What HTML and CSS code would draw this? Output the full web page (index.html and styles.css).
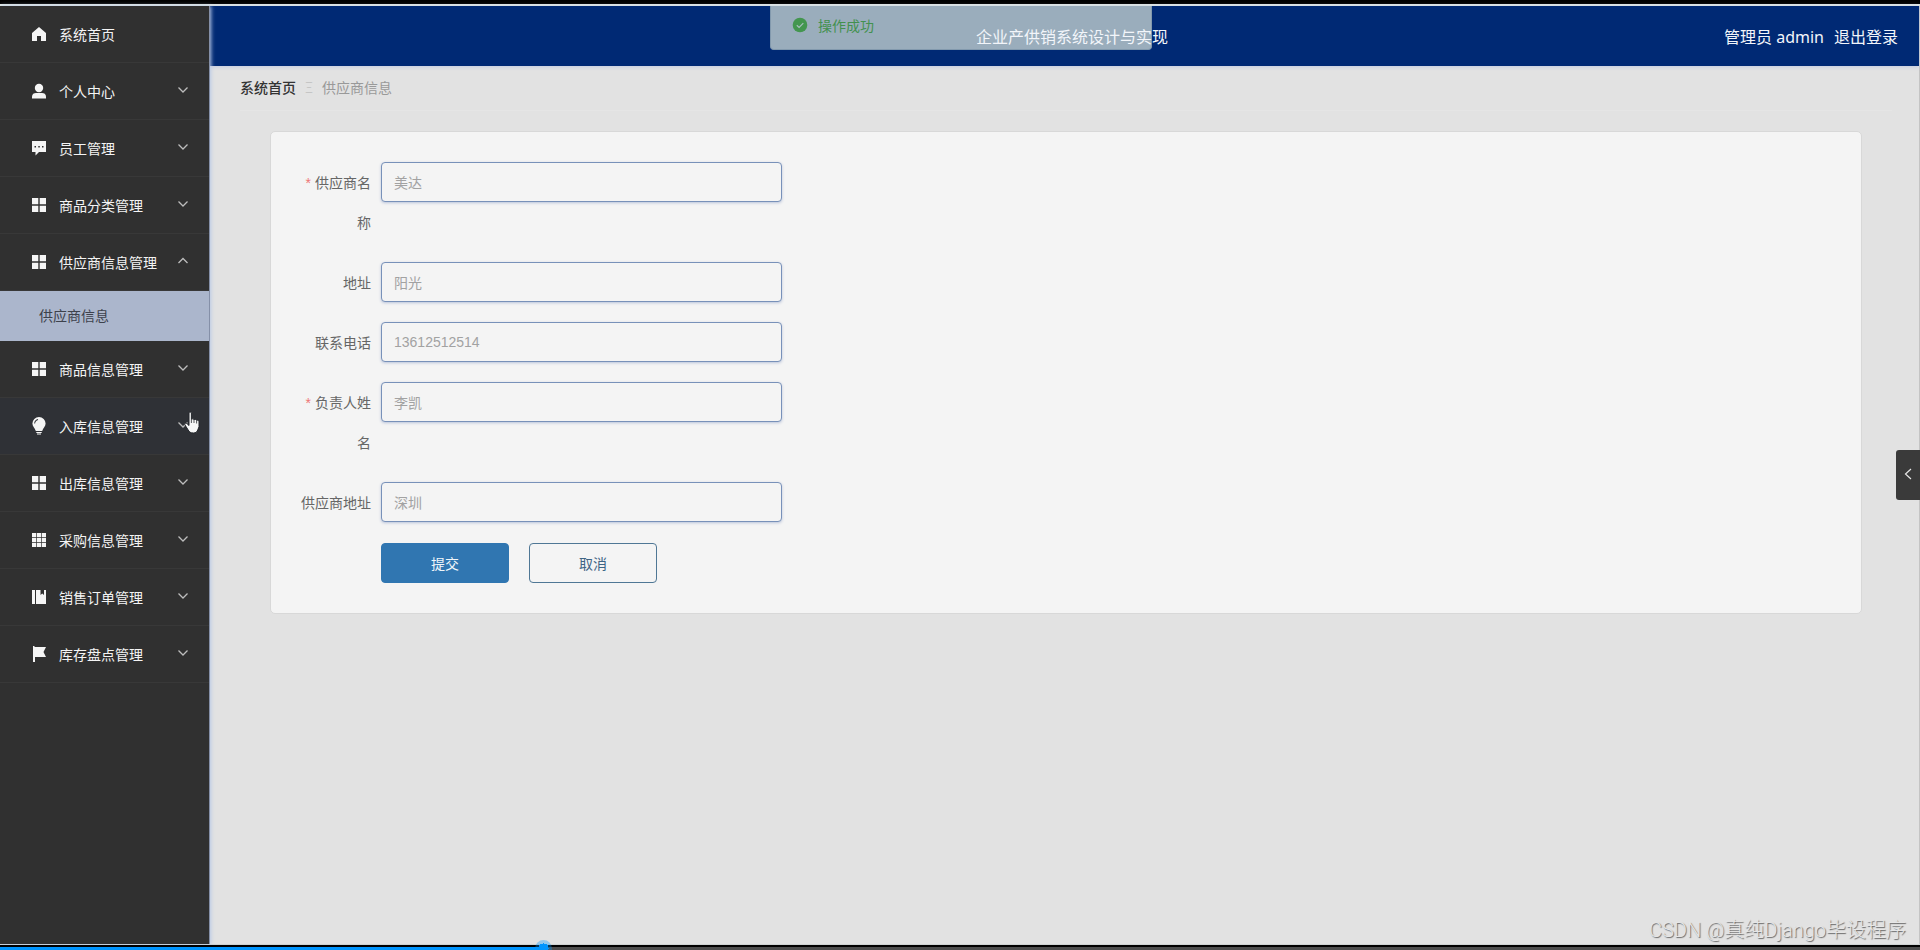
FILE: index.html
```html
<!DOCTYPE html>
<html lang="zh-CN">
<head>
<meta charset="utf-8">
<title>企业产供销系统设计与实现</title>
<link rel="stylesheet" href="styles.css">
</head>
<body>
<svg class="sprite" aria-hidden="true">
  <symbol id="home" viewBox="0 0 16 16"><path d="M8 1 1 7v8h5v-5h4v5h5V7z"/></symbol>
  <symbol id="user" viewBox="0 0 16 16"><circle cx="8" cy="5" r="4.2"/><path d="M1 15.500v-2C1 11 3 10 5 10h6c2 0 4 1 4 3.500v2z"/></symbol>
  <symbol id="chat" viewBox="0 0 16 16"><path fill-rule="evenodd" d="M1 1h14v11H8l-3.500 3.500V12H1zM3.500 6v1.500H5V6zM7.300 6v1.500h1.500V6zM11 6v1.500h1.500V6z"/></symbol>
  <symbol id="menu" viewBox="0 0 16 16"><path d="M1 1h6.300v6.300H1zM8.700 1H15v6.300H8.700zM1 8.700h6.300V15H1zM8.700 8.700H15V15H8.700z"/></symbol>
  <symbol id="bulb" viewBox="0 0 16 18"><path fill-rule="evenodd" d="M8 0a6.600 6.600 0 0 0-6.600 6.600C1.400 9.500 4 11.500 4.800 14h6.400c.8-2.500 3.400-4.500 3.400-7.400A6.600 6.600 0 0 0 8 0zM3.200 6.500C3.200 4 5 2.200 7 2l.1.900C5.500 3.200 4.200 4.600 4.100 6.500z"/><path d="M5.300 15h5.400v1H5.300zM6 16.500h4v1H6z"/></symbol>
  <symbol id="grid" viewBox="0 0 16 16"><path d="M1 1h4.300v4.300H1zM6 1h4v4.300H6zM10.700 1H15v4.300h-4.300zM1 6h4.300v4H1zM6 6h4v4H6zM10.700 6H15v4h-4.300zM1 10.700h4.300V15H1zM6 10.700h4V15H6zM10.700 10.700H15V15h-4.300z"/></symbol>
  <symbol id="book" viewBox="0 0 16 16"><path d="M1 1h3v14H1zM5 1h4.500v5l1.700-1.500L13 6V1h2v14H5z"/></symbol>
  <symbol id="flag" viewBox="0 0 16 18"><path d="M2 1h1.500v1H15l-2.500 5 2.500 5H4v5H2z"/></symbol>
  <symbol id="down" viewBox="0 0 12 12"><path d="m1.500 3.500 4.500 4.500 4.500-4.500" fill="none" stroke="currentColor" stroke-width="1.300"/></symbol>
  <symbol id="up" viewBox="0 0 12 12"><path d="M1.500 8 6 3.500 10.500 8" fill="none" stroke="currentColor" stroke-width="1.300"/></symbol>
</svg>

<div class="frame">
  <div class="frame-top"></div>
  <div class="app">
    <nav class="sidebar" aria-label="主菜单">
      <a class="item" href="#"><svg class="icon"><use href="#home"/></svg><span class="item-text">系统首页</span></a>
      <a class="item" href="#"><svg class="icon"><use href="#user"/></svg><span class="item-text">个人中心</span><svg class="arrow"><use href="#down"/></svg></a>
      <a class="item" href="#"><svg class="icon"><use href="#chat"/></svg><span class="item-text">员工管理</span><svg class="arrow"><use href="#down"/></svg></a>
      <a class="item" href="#"><svg class="icon"><use href="#menu"/></svg><span class="item-text">商品分类管理</span><svg class="arrow"><use href="#down"/></svg></a>
      <a class="item" href="#"><svg class="icon"><use href="#menu"/></svg><span class="item-text">供应商信息管理</span><svg class="arrow"><use href="#up"/></svg></a>
      <a class="subitem" href="#">供应商信息</a>
      <a class="item" href="#"><svg class="icon"><use href="#menu"/></svg><span class="item-text">商品信息管理</span><svg class="arrow"><use href="#down"/></svg></a>
      <a class="item item-hover" href="#"><svg class="icon"><use href="#bulb"/></svg><span class="item-text">入库信息管理</span><svg class="arrow"><use href="#down"/></svg>
        <svg class="pointer" viewBox="0 0 18 24"><path d="M5 2c0-1.300 2.400-1.300 2.400 0v6.500c.4-1 2.500-.8 2.600.4.500-.9 2.400-.6 2.600.6.700-.7 2.400-.3 2.400 1.200v4.800c0 1-.8 2-1.200 3.200-.5 2-2 3.300-4.300 3.300-3 0-4.300-1-5.300-3L.9 13.800c-.8-1.300.8-2.300 2-1.300L5 14.500z" fill="#f7f7f7" stroke="#24272c" stroke-width="1"/><path d="M7.400 8.500V12M10 9v3M12.600 10v2.500" stroke="#44464a" stroke-width="0.900"/></svg></a>
      <a class="item" href="#"><svg class="icon"><use href="#menu"/></svg><span class="item-text">出库信息管理</span><svg class="arrow"><use href="#down"/></svg></a>
      <a class="item" href="#"><svg class="icon"><use href="#grid"/></svg><span class="item-text">采购信息管理</span><svg class="arrow"><use href="#down"/></svg></a>
      <a class="item" href="#"><svg class="icon"><use href="#book"/></svg><span class="item-text">销售订单管理</span><svg class="arrow"><use href="#down"/></svg></a>
      <a class="item" href="#"><svg class="icon"><use href="#flag"/></svg><span class="item-text">库存盘点管理</span><svg class="arrow"><use href="#down"/></svg></a>
    </nav>

    <div class="content">
      <header class="header">
        <h1 class="title">企业产供销系统设计与实现</h1>
        <div class="account"><span>管理员 admin</span><a class="logout" href="#">退出登录</a></div>
      </header>
      <main class="main">
        <nav class="crumbs" aria-label="面包屑"><a class="crumb-home" href="#">系统首页</a><span class="crumb-sep">Ξ</span><span>供应商信息</span></nav>
        <form class="card">
          <div class="row">
            <label class="label required" for="name">供应商名称</label>
            <input class="input" id="name" type="text" value="美达" readonly>
          </div>
          <div class="row">
            <label class="label" for="addr">地址</label>
            <input class="input" id="addr" type="text" value="阳光" readonly>
          </div>
          <div class="row">
            <label class="label" for="phone">联系电话</label>
            <input class="input" id="phone" type="text" value="13612512514" readonly>
          </div>
          <div class="row">
            <label class="label required" for="owner">负责人姓名</label>
            <input class="input" id="owner" type="text" value="李凯" readonly>
          </div>
          <div class="row">
            <label class="label" for="supplier">供应商地址</label>
            <input class="input" id="supplier" type="text" value="深圳" readonly>
          </div>
          <div class="actions">
            <button class="btn btn-primary" type="button">提交</button>
            <button class="btn" type="button">取消</button>
          </div>
        </form>
      </main>
    </div>

    <div class="toast" role="status">
      <svg class="toast-icon" viewBox="0 0 16 16"><circle cx="8" cy="8" r="7.300" fill="#43964f"/><path d="m4.800 8.200 2.300 2.200 4.200-4.200" fill="none" stroke="#a9bfc0" stroke-width="1.200"/></svg>
      <span>操作成功</span>
    </div>
    <button class="drawer" type="button" aria-label="展开"><svg class="drawer-icon" viewBox="0 0 8 12"><path d="M7 1 1.500 6 7 11" fill="none" stroke="#e6e6e6" stroke-width="1.200"/></svg></button>
    <div class="watermark">CSDN @真纯Django毕设程序</div>
  </div>
  <div class="player">
    <input class="seek" type="range" min="0" max="1000" value="281" aria-label="播放进度">
  </div>
</div>
</body>
</html>
```
FILE: styles.css
```css
* { box-sizing: border-box; }

body {
  margin: 0;
  font-family: "Noto Sans CJK SC", "Noto Sans", sans-serif;
  font-size: 14px;
  color: #666;
  background: #000;
}

a { color: inherit; text-decoration: none; }

.sprite { display: none; }

.frame {
  display: flex;
  flex-direction: column;
  height: 100vh;
  overflow: hidden;
}

.frame-top {
  flex: none;
  height: 6px;
  background: #000;
  border-bottom: 2px solid #dfe6e4;
}

.app {
  position: relative;
  display: flex;
  flex: 1;
  min-height: 0;
  background: #e2e2e2;
  border-bottom: 1px solid #cfd2d2;
}

.sidebar {
  position: relative;
  flex: none;
  width: 210px;
  background: #303030;
  border-right: 1px solid #8590a8;
  box-shadow: 1px 0 4px #b9c9e6;
}

.item {
  position: relative;
  display: flex;
  align-items: center;
  gap: 12px;
  height: 57px;
  padding: 0 20px 0 31px;
  border-bottom: 1px solid #383838;
  color: #f4f4f4;
}

.item-hover { background: #2f3136; }

.icon {
  width: 16px;
  height: 18px;
  fill: #f5f5f5;
}

.item-text { flex: 1; white-space: nowrap; }

.arrow {
  width: 12px;
  height: 12px;
  margin-bottom: 3px;
  color: #bdbdbd;
}

.pointer {
  position: absolute;
  right: 7px;
  top: 13px;
  width: 18px;
  height: 24px;
}

.subitem {
  display: block;
  height: 50px;
  padding-left: 39px;
  line-height: 48px;
  background: #abb6cc;
  color: #3d424c;
}

.content {
  display: flex;
  flex: 1;
  flex-direction: column;
  border-right: 1px solid #c4c4c4;
}

.header {
  display: grid;
  grid-template-columns: 1fr auto 1fr;
  align-items: center;
  height: 60px;
  padding: 0 21px 0 36px;
  background: #002974;
  box-shadow: 0 1px 4px #c3cbe2;
  color: #f2f5fa;
  font-size: 16px;
}

.title {
  position: relative;
  z-index: 2;
  grid-column: 2;
  margin: 0;
  font-size: 16px;
  font-weight: 400;
}

.account {
  display: flex;
  gap: 10px;
  justify-content: flex-end;
  font-family: "Noto Sans", "Noto Sans CJK SC", sans-serif;
}

.main { padding: 0 27px 30px 30px; }

.crumbs {
  display: flex;
  align-items: center;
  height: 45px;
  padding-bottom: 2px;
  border-bottom: 1px solid #e5e5e5;
  color: #999;
}

.crumb-home { color: #333; font-weight: 500; }

.crumb-sep { margin: 0 9px; color: #c0c0c0; font-weight: 300; }

.card {
  margin: 20px 30px 0;
  padding: 30px;
  background: #f4f4f4;
  border: 1px solid #d8d8d8;
  border-radius: 5px;
}

.row {
  display: flex;
  align-items: flex-start;
  margin-bottom: 20px;
}

.label {
  flex: none;
  width: 80px;
  padding-right: 10px;
  line-height: 40px;
  text-align: right;
}

.required::before {
  content: "*";
  margin-right: 4px;
  color: #e77;
  font-family: "Liberation Sans", sans-serif;
  line-height: 1;
}

.input {
  width: 401px;
  height: 40px;
  padding: 0 12px;
  background: #f4f4f4;
  border: 1px solid #7891b9;
  border-radius: 4px;
  box-shadow: 0 1px 3px #b9c3da;
  color: #a2a2a2;
  font-family: "Liberation Sans", "Noto Sans CJK SC", sans-serif;
  font-size: 14px;
  outline: none;
}

.actions {
  display: flex;
  gap: 20px;
  padding: 1px 0 0 80px;
}

.btn {
  width: 128px;
  height: 40px;
  padding: 0;
  background: #f4f4f4;
  border: 1px solid #4f7795;
  border-radius: 4px;
  color: #3f6585;
  font-family: inherit;
  font-size: 14px;
}

.btn-primary {
  background: #3076b1;
  border-color: #3076b1;
  color: #f1f6fa;
}

.toast {
  position: absolute;
  top: 0;
  left: 50%;
  z-index: 1;
  display: flex;
  align-items: center;
  gap: 10px;
  width: 382px;
  height: 44px;
  margin-left: -190px;
  padding: 0 21px 5px;
  background: #9aadbc;
  border: 1px solid #8299ad;
  border-top: 0;
  border-radius: 0 0 4px 4px;
  color: #43914f;
}

.toast-icon { width: 16px; height: 16px; }

.drawer {
  position: absolute;
  top: 444px;
  right: 0;
  width: 24px;
  height: 50px;
  padding: 0;
  background: #3a3a3a;
  border: 0;
  border-radius: 3px 0 0 3px;
}

.drawer-icon { width: 8px; height: 12px; }

.watermark {
  position: absolute;
  right: 14px;
  bottom: 0;
  color: #e6e6e6;
  font-family: Roboto, "Noto Sans CJK SC", sans-serif;
  font-size: 20px;
  font-weight: 300;
  line-height: 28px;
  text-shadow: 1px 1px 1px #666;
}

.player {
  position: relative;
  flex: none;
  height: 5px;
  background: #000;
}

.seek {
  position: absolute;
  top: -5px;
  left: 0;
  width: 100%;
  height: 17px;
  margin: 0;
  background: transparent;
  appearance: none;
}

.seek::-webkit-slider-runnable-track {
  height: 3px;
  background: linear-gradient(to right, #0095ff 28.3%, #4d4d4d 28.3%);
}

.seek::-webkit-slider-thumb {
  width: 17px;
  height: 17px;
  margin-top: -7px;
  appearance: none;
  border-radius: 50%;
  background: radial-gradient(circle, #0095ff 5px, rgba(0, 149, 255, 0.35) 5px);
}
```
